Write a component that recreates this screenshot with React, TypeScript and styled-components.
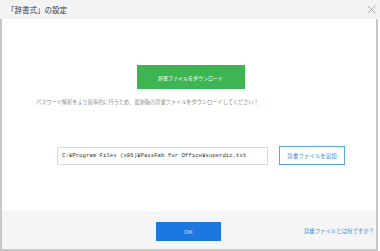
import React from 'react';
import styled, { createGlobalStyle } from 'styled-components';

const GlobalStyle = createGlobalStyle`
  html, body {
    margin: 0;
    padding: 0;
    background: #ffffff;
  }
  body {
    font-family: "Noto Sans CJK JP", "Noto Sans", sans-serif;
  }
`;

const Window = styled.div`
  width: 380px;
  height: 251px;
  display: flex;
  flex-direction: column;
  overflow: hidden;
`;

const TitleBar = styled.div`
  height: 19px;
  flex-shrink: 0;
  background: #f3f3f3;
  display: flex;
  align-items: center;
  justify-content: space-between;
  padding: 0 4px 0 7px;
`;

const Title = styled.span`
  font-size: 7.5px;
  line-height: 19px;
  color: #333333;
  letter-spacing: 0;
`;

const CloseButton = styled.button`
  width: 10px;
  height: 10px;
  padding: 0;
  margin-top: -1px;
  border: none;
  background: none;
  display: flex;
  align-items: center;
  justify-content: center;
  cursor: pointer;
`;

const Frame = styled.div`
  width: 378px;
  flex: 1;
  box-sizing: border-box;
  border: 0 solid #c8c8c8;
  border-left-width: 2px;
  border-right-width: 2px;
  border-bottom-width: 2px;
  display: flex;
  flex-direction: column;
`;

const Body = styled.div`
  flex: 1;
  background: #ffffff;
  display: flex;
  flex-direction: column;
  padding-top: 46px;
`;

const DownloadButton = styled.button`
  align-self: center;
  margin-left: 3px;
  width: 108px;
  height: 24px;
  border: none;
  background: #3db553;
  color: #ffffff;
  font-family: inherit;
  font-size: 5px;
  padding: 0;
  cursor: pointer;
`;

const Hint = styled.p`
  margin: 9px 0 0 34px;
  font-size: 5.2px;
  line-height: 8px;
  color: #8a8a8a;
`;

const PathRow = styled.div`
  display: flex;
  align-items: center;
  gap: 11px;
  margin: 40px 0 0 55px;
`;

const PathInput = styled.input`
  width: 211px;
  height: 18px;
  box-sizing: border-box;
  border: 1px solid #dadada;
  padding: 0 0 0 4px;
  font-family: "Liberation Mono", "DejaVu Sans Mono", monospace;
  font-size: 5.7px;
  color: #333333;
  outline: none;
`;

const AddButton = styled.button`
  width: 66px;
  height: 19px;
  box-sizing: border-box;
  border: 1px solid #5aa5ea;
  background: #ffffff;
  color: #3b8fdc;
  font-family: inherit;
  font-size: 5.5px;
  padding: 0;
  cursor: pointer;
`;

const Footer = styled.div`
  height: 38px;
  flex-shrink: 0;
  background: #f5f5f5;
  display: grid;
  grid-template-columns: 1fr auto 1fr;
  align-items: center;
  padding-right: 2px;
`;

const OkButton = styled.button`
  grid-column: 2;
  width: 65px;
  height: 19px;
  margin-left: 1px;
  margin-top: 3px;
  border: none;
  background: #1a78e0;
  color: #d6e8fc;
  font-family: "Noto Sans", sans-serif;
  font-size: 6px;
  padding: 0;
  cursor: pointer;
`;

const HelpLink = styled.a`
  grid-column: 3;
  justify-self: end;
  margin-top: 1px;
  font-size: 5.4px;
  color: #3b8fdb;
  text-decoration: none;
  cursor: pointer;
`;

export default function App() {
  return (
    <>
      <GlobalStyle />
      <Window>
        <TitleBar>
          <Title>「辞書式」の設定</Title>
          <CloseButton aria-label="close">
            <svg width="9" height="9" viewBox="0 0 9 9">
              <path d="M0.5 0.5 L8.5 8.5 M8.5 0.5 L0.5 8.5" stroke="#9a9a9a" strokeWidth="0.8" fill="none" />
            </svg>
          </CloseButton>
        </TitleBar>
        <Frame>
          <Body>
            <DownloadButton>辞書ファイルをダウンロード</DownloadButton>
            <Hint>パスワード解析をより効率的に行うため、最新版の辞書ファイルをダウンロードしてください！</Hint>
            <PathRow>
              <PathInput readOnly value="C:¥Program Files (x86)¥PassFab for Office¥superdic.txt" />
              <AddButton>辞書ファイルを追加</AddButton>
            </PathRow>
          </Body>
          <Footer>
            <OkButton>OK</OkButton>
            <HelpLink>辞書ファイルとは何ですか？</HelpLink>
          </Footer>
        </Frame>
      </Window>
    </>
  );
}
